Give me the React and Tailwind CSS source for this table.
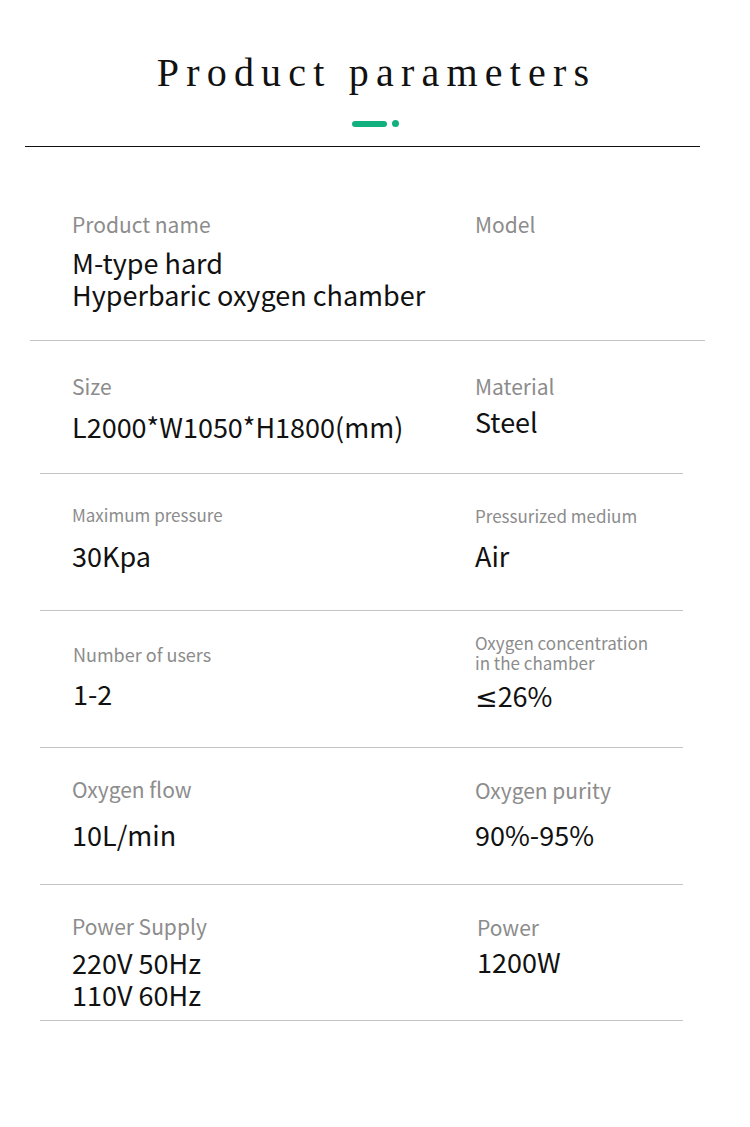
import React from "react";

const sans = { fontFamily: '"Noto Sans CJK SC", "Noto Sans", sans-serif' };

const Label = ({ children, className = "" }) => (
  <div className={`text-[#8c8c8c] font-normal ${className}`}>{children}</div>
);

const Value = ({ children, className = "" }) => (
  <div className={`text-[#111] text-[27px] leading-[32px] font-normal ${className}`}>{children}</div>
);

export default function App() {
  return (
    <div className="w-[750px] h-[1127px] bg-white overflow-hidden" style={sans}>
      <div className="pt-[47px] flex flex-col items-center">
        <h1
          className="text-[40px] leading-[52px] text-[#111] tracking-[7.2px] pl-[3px]"
          style={{ fontFamily: '"Liberation Serif", serif' }}
        >
          Product parameters
        </h1>
        <div className="mt-[21px] flex items-center gap-[5px]">
          <div className="w-[35px] h-[6px] rounded-full bg-[#13b07f]" />
          <div className="w-[7px] h-[7px] rounded-full bg-[#13b07f]" />
        </div>
      </div>
      <div className="mt-[19px] ml-[25px] w-[675px] h-px bg-[#111]" />

      {/* row 1 */}
      <div className="ml-[30px] w-[675px] h-[194px] border-b border-[#c4c4c4] flex pl-[42px]">
        <div className="w-[403px] pt-[63px]">
          <Label className="text-[21px] leading-[28px]">Product name</Label>
          <Value className="mt-[9px]">
            M-type hard
            <br />
            Hyperbaric oxygen chamber
          </Value>
        </div>
        <div className="pt-[63px]">
          <Label className="text-[21px] leading-[28px]">Model</Label>
        </div>
      </div>

      {/* row 2 */}
      <div className="ml-[40px] w-[643px] h-[133px] border-b border-[#c4c4c4] flex pl-[32px]">
        <div className="w-[403px] pt-[31px]">
          <Label className="text-[21px] leading-[28px]">Size</Label>
          <Value className="mt-[11px]">L2000*W1050*H1800(mm)</Value>
        </div>
        <div className="pt-[31px]">
          <Label className="text-[21px] leading-[28px]">Material</Label>
          <Value className="mt-[6px]">Steel</Value>
        </div>
      </div>

      {/* row 3 */}
      <div className="ml-[40px] w-[643px] h-[137px] border-b border-[#c4c4c4] flex pl-[32px]">
        <div className="w-[403px] pt-[30px]">
          <Label className="text-[17px] leading-[22px]">Maximum pressure</Label>
          <Value className="mt-[14px]">30Kpa</Value>
        </div>
        <div className="pt-[31px]">
          <Label className="text-[17px] leading-[22px]">Pressurized medium</Label>
          <Value className="mt-[13px]">Air</Value>
        </div>
      </div>

      {/* row 4 */}
      <div className="ml-[40px] w-[643px] h-[137px] border-b border-[#c4c4c4] flex pl-[33px]">
        <div className="w-[402px] pt-[31px]">
          <Label className="text-[18px] leading-[24px]">Number of users</Label>
          <Value className="mt-[12px]">1-2</Value>
        </div>
        <div className="pt-[22px]">
          <Label className="text-[17px] leading-[20px]">
            Oxygen concentration
            <br />
            in the chamber
          </Label>
          <Value className="mt-[7px]">
            <span style={{ fontFamily: '"Noto Sans", "DejaVu Sans", sans-serif' }}>≤</span>26%
          </Value>
        </div>
      </div>

      {/* row 5 */}
      <div className="ml-[40px] w-[643px] h-[137px] border-b border-[#c4c4c4] flex pl-[32px]">
        <div className="w-[403px] pt-[27px]">
          <Label className="text-[21px] leading-[28px]">Oxygen flow</Label>
          <Value className="mt-[16px]">10L/min</Value>
        </div>
        <div className="pt-[28px]">
          <Label className="text-[21px] leading-[28px]">Oxygen purity</Label>
          <Value className="mt-[15px]">90%-95%</Value>
        </div>
      </div>

      {/* row 6 */}
      <div className="ml-[40px] w-[643px] h-[136px] border-b border-[#c4c4c4] flex pl-[32px]">
        <div className="w-[405px] pt-[27px]">
          <Label className="text-[21px] leading-[28px]">Power Supply</Label>
          <Value className="mt-[7px]">
            220V 50Hz
            <br />
            110V 60Hz
          </Value>
        </div>
        <div className="pt-[28px]">
          <Label className="text-[21px] leading-[28px]">Power</Label>
          <Value className="mt-[5px]">1200W</Value>
        </div>
      </div>
    </div>
  );
}
